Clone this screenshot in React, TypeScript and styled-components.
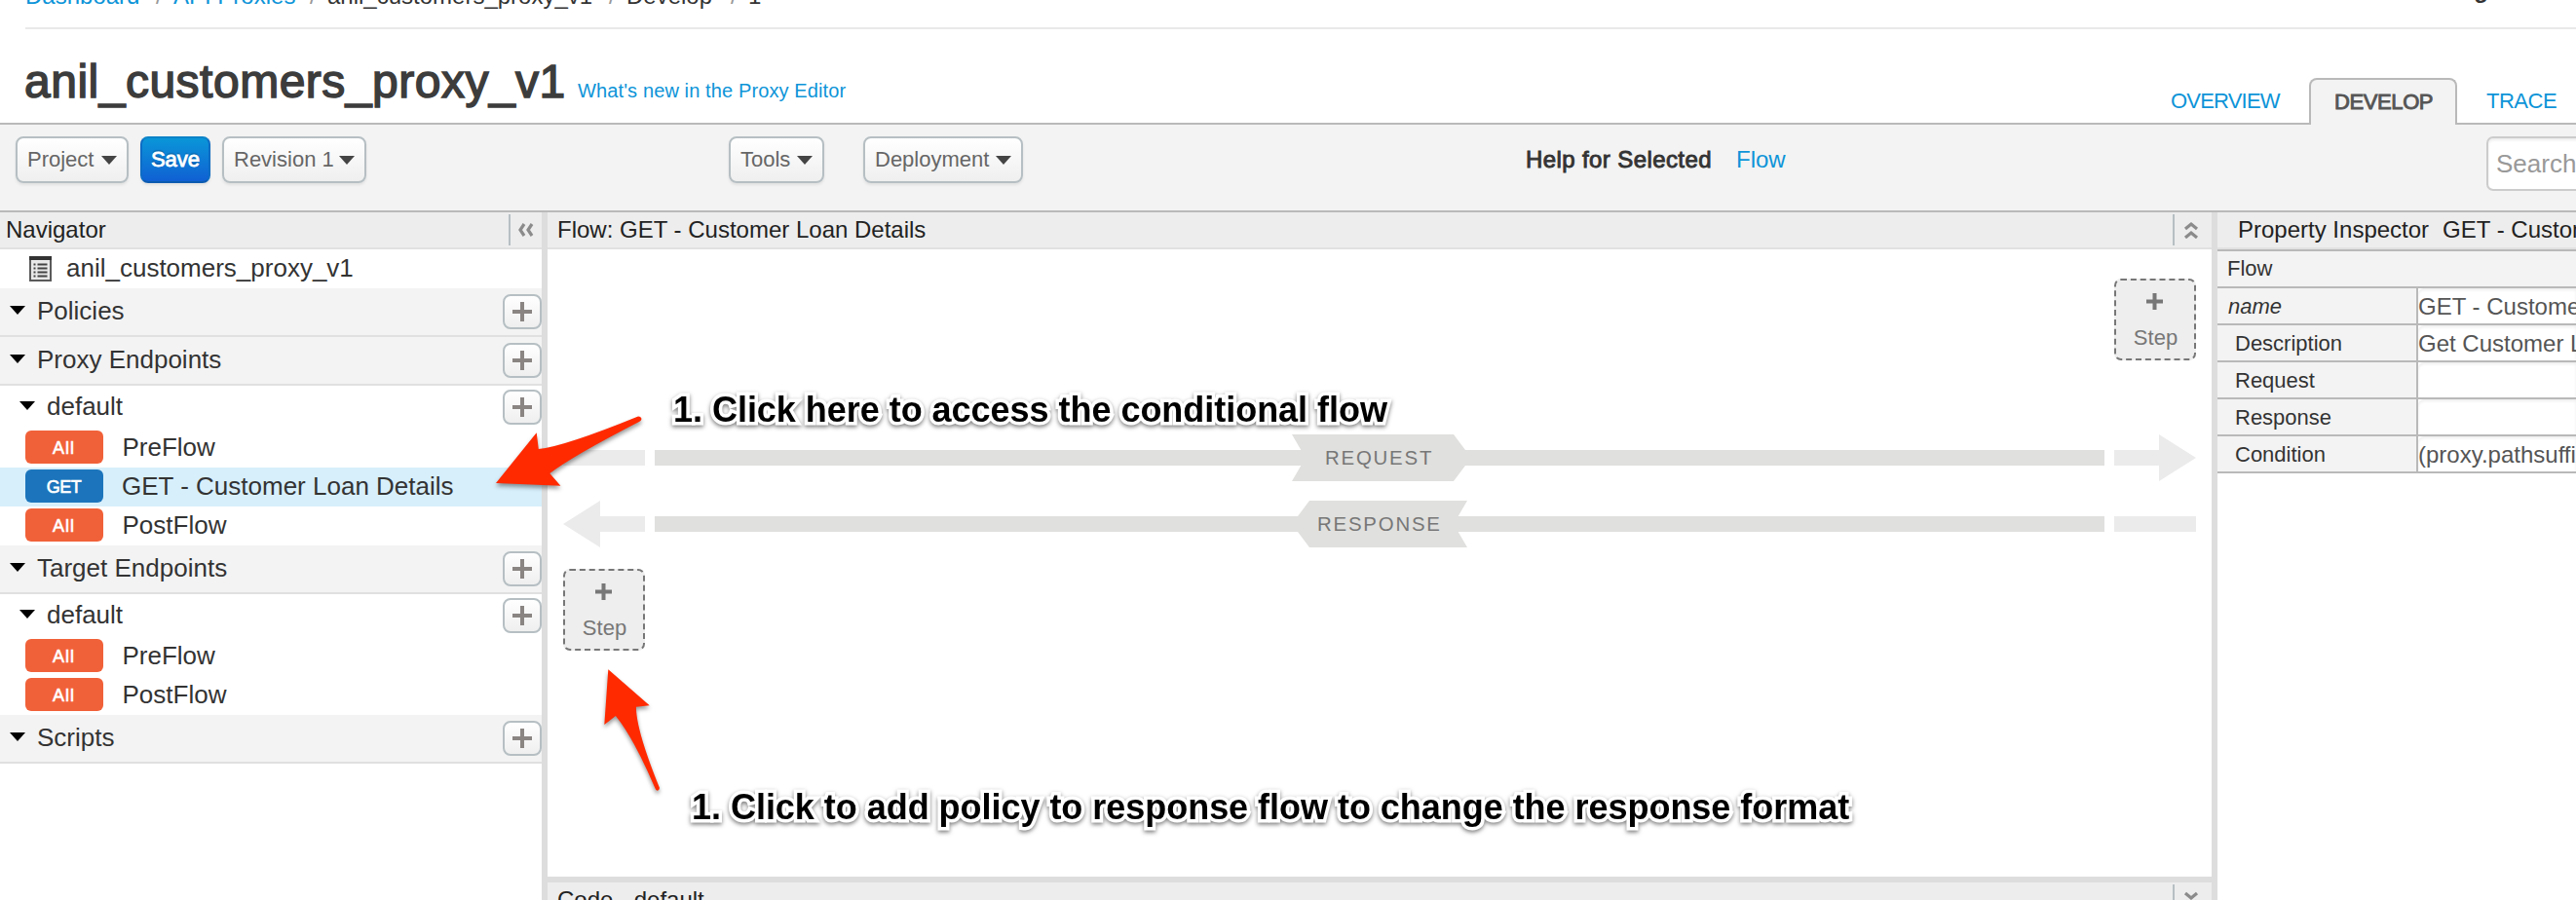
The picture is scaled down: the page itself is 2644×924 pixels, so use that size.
import React from "react";
import styled, { createGlobalStyle, css } from "styled-components";

const Global = createGlobalStyle`
  * { box-sizing: border-box; }
  html, body { margin: 0; padding: 0; background: #fff; }
  body { overflow: hidden; font-family: "Liberation Sans", Arial, sans-serif; color: #333; }
`;

const line = "#b9b9b9";
const soft = "#dddddd";
const link = "#0d94d8";

const Page = styled.div`
  position: relative;
  width: 2644px;
  height: 924px;
  overflow: hidden;
  display: flex;
  flex-direction: column;
  white-space: nowrap;
`;

/* ---------- top ---------- */
const Crumbs = styled.div`
  height: 30px;
  margin-left: 26px;
  border-bottom: 2px solid #e9e9e9;
  display: flex;
  overflow: hidden;
  font-size: 24px;
  line-height: 28px;
`;
const Crumb = styled.span<{ $link?: boolean; $w: number }>`
  width: ${(p) => p.$w}px;
  margin-top: -18px;
  color: ${(p) => (p.$link ? link : "#333")};
`;
const Slash = styled.span`
  width: 18px;
  margin-top: -18px;
  color: #999;
`;
const OrgName = styled.strong`
  margin: -24px 90px 0 auto;
`;
const TitleBar = styled.header`
  height: 98px;
  padding-left: 25px;
  border-bottom: 2px solid ${line};
  display: flex;
`;
const Title = styled.h1`
  margin: 26px 0 0;
  width: 568px;
  font-size: 48px;
  font-weight: 400;
  line-height: 56px;
  letter-spacing: 0.5px;
  color: #3c3c3c;
  -webkit-text-stroke: 1.5px #3c3c3c;
`;
const NewsLink = styled.a`
  margin-top: 51px;
  font-size: 20px;
  line-height: 24px;
  letter-spacing: 0.12px;
  color: ${link};
`;
const Tabs = styled.nav`
  margin: 50px 0 -2px auto;
  width: 416px;
  display: flex;
  font-size: 22px;
  line-height: 48px;
`;
const Tab = styled.a<{ $w: number; $ls: number }>`
  flex: none;
  width: ${(p) => p.$w}px;
  height: 46px;
  line-height: 48px;
  letter-spacing: ${(p) => p.$ls}px;
  color: ${link};
`;
const ActiveTab = styled(Tab)`
  height: 48px;
  line-height: 45px;
  margin-right: 30px;
  padding-left: 24px;
  background: #f3f3f3;
  border: 2px solid ${line};
  border-bottom: 0;
  border-radius: 8px 8px 0 0;
  color: #555;
  -webkit-text-stroke: 0.9px #555;
`;

/* ---------- toolbar ---------- */
const Toolbar = styled.div`
  height: 90px;
  padding: 12px 0 0 16px;
  background: #f3f3f3;
  border-bottom: 2px solid ${line};
  display: flex;
  align-items: flex-start;
  overflow: hidden;
`;
const Button = styled.button<{ $w: number; $gap?: number; $primary?: boolean }>`
  flex: none;
  width: ${(p) => p.$w}px;
  height: 48px;
  margin: 0 0 0 ${(p) => p.$gap ?? 0}px;
  padding: 0 10px 0;
  display: flex;
  align-items: center;
  justify-content: space-between;
  border: 2px solid #b6bfc3;
  border-radius: 8px;
  background: linear-gradient(#fff, #efefef);
  box-shadow: 0 2px 3px rgba(0, 0, 0, 0.08);
  font: 22px "Liberation Sans", Arial, sans-serif;
  color: #666;
  ${(p) =>
    p.$primary &&
    css`
      background: linear-gradient(#0a96d8, #1060d3);
      border-color: #0b83c8 #0d6cc5 #0d5bb0;
      justify-content: center;
      color: #fff;
      -webkit-text-stroke: 0.8px #fff;
      text-shadow: 0 -2px 1px rgba(0, 0, 0, 0.2);
    `}
`;
const Help = styled.span`
  flex: none;
  margin-left: 516px;
  width: 216px;
  font-size: 24px;
  line-height: 48px;
  letter-spacing: 0.4px;
  -webkit-text-stroke: 0.9px #333;
`;
const HelpLink = styled.a`
  flex: none;
  width: 770px;
  font-size: 24px;
  line-height: 48px;
  color: ${link};
`;
const Search = styled.div`
  flex: none;
  width: 300px;
  height: 56px;
  padding-left: 8px;
  background: #fff;
  border: 2px solid #ccc;
  border-radius: 7px;
  box-shadow: inset 0 2px 3px rgba(0, 0, 0, 0.08);
  font-size: 26px;
  line-height: 52px;
  color: #999;
`;

/* ---------- panels ---------- */
const Body = styled.div`
  flex: 1;
  min-height: 0;
  display: grid;
  grid-template-columns: 562px 1714px 368px;
`;
const Column = styled.section`
  min-width: 0;
  display: flex;
  flex-direction: column;
  overflow: hidden;
`;
const SplitColumn = styled(Column)`
  border-right: 6px solid ${soft};
`;
const PanelHead = styled.div<{ $pad: number }>`
  flex: none;
  height: 38px;
  padding-left: ${(p) => p.$pad}px;
  display: flex;
  justify-content: space-between;
  background: #ededed;
  border-bottom: 2px solid #e1e1e1;
  font-size: 24px;
  line-height: 36px;
  color: #222;
`;
const Collapse = styled.div<{ $w: number; $pad: number }>`
  width: ${(p) => p.$w}px;
  height: 32px;
  margin-top: 2px;
  border-left: 2px solid #b6bfc3;
  display: flex;
  align-items: center;
  padding-left: ${(p) => p.$pad}px;
`;
const Inspected = styled.span`
  margin-left: 14px;
`;

/* ---------- navigator ---------- */
const Row = styled.div<{ $pad: number; $h: number; $group?: boolean; $on?: boolean }>`
  flex: none;
  height: ${(p) => p.$h}px;
  padding-left: ${(p) => p.$pad}px;
  display: flex;
  align-items: center;
  font-size: 26px;
  background: ${(p) => (p.$group ? "#f3f3f3" : p.$on ? "#d7effb" : "#fff")};
  border-bottom: ${(p) => (p.$group ? "2px solid #e0e0e0" : "0")};
`;
const RowText = styled.span<{ $gap: number }>`
  margin-left: ${(p) => p.$gap}px;
  padding-bottom: 2px;
`;
const AddButton = styled.button`
  width: 40px;
  height: 36px;
  margin: 0 0 0 auto;
  padding: 0;
  display: flex;
  align-items: center;
  justify-content: center;
  border: 2px solid #b6bfc3;
  border-radius: 8px;
  background: linear-gradient(#fff, #efefef);
`;
const Badge = styled.span<{ $get?: boolean }>`
  width: 80px;
  height: 34px;
  margin-bottom: 2px;
  padding: 0 1px 0 0;
  text-align: center;
  font-size: 18px;
  line-height: 36px;
  letter-spacing: ${(p) => (p.$get ? -0.5 : 1)}px;
  border-radius: 6px;
  color: #fff;
  -webkit-text-stroke: 0.6px #fff;
  background: ${(p) => (p.$get ? "#1c75bc" : "#f16139")};
`;

/* ---------- flow ---------- */
const Canvas = styled.div`
  flex: none;
  height: 650px;
  padding: 30px 16px 0;
  border-bottom: 6px solid ${soft};
  display: flex;
  flex-direction: column;
`;
const Step = styled.button<{ $end?: boolean }>`
  flex: none;
  width: 84px;
  height: 84px;
  margin: 0;
  padding: 13px 2px 0 0;
  align-self: ${(p) => (p.$end ? "flex-end" : "flex-start")};
  display: flex;
  flex-direction: column;
  align-items: center;
  background: #eeeeee;
  border: 2px dashed #777;
  border-radius: 7px;
  font: 22px "Liberation Sans", Arial, sans-serif;
  color: #777;
`;
const StepText = styled.span`
  margin: 17px 0 0 3px;
  line-height: 24px;
`;
const Lane = styled.div<{ $top: number; $bottom?: number }>`
  flex: none;
  height: 48px;
  margin: ${(p) => p.$top}px 0 ${(p) => p.$bottom ?? 0}px;
  display: grid;
  grid-template-columns: 84px 1fr 84px;
  column-gap: 10px;
`;
const Track = styled.div`
  padding-left: 654px;
  background: linear-gradient(#e0e0de, #e0e0de) 0 50% / 100% 16px no-repeat;
`;
const Stub = styled.div`
  align-self: center;
  height: 16px;
  background: #ebebeb;
`;
const ArrowStub = styled.div<{ $left?: boolean }>`
  background: #ebebeb;
  clip-path: ${(p) =>
    p.$left
      ? "polygon(0 50%, 38px 0, 38px 16px, 100% 16px, 100% 32px, 38px 32px, 38px 100%)"
      : "polygon(0 16px, 46px 16px, 46px 0, 100% 50%, 46px 100%, 46px 32px, 0 32px)"};
`;
const LaneLabel = styled.div<{ $left?: boolean }>`
  width: ${(p) => (p.$left ? 180 : 184)}px;
  height: 48px;
  padding-left: ${(p) => (p.$left ? 26 : 34)}px;
  background: #e0e0de;
  font-size: 20.4px;
  line-height: 49px;
  letter-spacing: 1.8px;
  color: #777;
  clip-path: ${(p) =>
    p.$left
      ? "polygon(18px 0, 100% 0, 166px 50%, 100% 100%, 18px 100%, 0 50%)"
      : "polygon(0 0, 166px 0, 100% 50%, 166px 100%, 0 100%, 14px 50%)"};
`;

/* ---------- inspector ---------- */
const PropGroup = styled.div`
  height: 40px;
  padding-left: 10px;
  border-top: 2px solid ${line};
  border-bottom: 2px solid ${line};
  background: #f3f3f3;
  font-size: 22px;
  line-height: 36px;
`;
const Prop = styled.div`
  height: 38px;
  display: grid;
  grid-template-columns: 206px 1fr;
  border-bottom: 2px solid ${line};
  line-height: 37px;
`;
const PropName = styled.div<{ $required?: boolean }>`
  height: 36px;
  padding-left: ${(p) => (p.$required ? 11 : 18)}px;
  font-size: 22px;
  font-style: ${(p) => (p.$required ? "italic" : "normal")};
  background: #f3f3f3;
  border-right: 2px solid ${line};
`;
const PropValue = styled.div`
  height: 36px;
  overflow: hidden;
  font-size: 24px;
  color: #555;
  border-radius: 6px 0 0 0;
  box-shadow: inset 0 2px 3px rgba(0, 0, 0, 0.07);
`;

/* ---------- callouts ---------- */
const Callout = styled.div<{ $x: number; $y: number }>`
  position: absolute;
  left: ${(p) => p.$x}px;
  top: ${(p) => p.$y}px;
  font-size: 36px;
  font-weight: 700;
  line-height: 40px;
  letter-spacing: -0.03px;
  color: #000;
  -webkit-text-stroke: 7px #fff;
  paint-order: stroke fill;
  filter: drop-shadow(0 2px 2px rgba(0, 0, 0, 0.5));
`;
const Pointers = styled.svg`
  position: absolute;
  left: 0;
  top: 0;
  pointer-events: none;
  filter: drop-shadow(0 3px 2px rgba(0, 0, 0, 0.4));
`;
const CaretSvg = styled.svg<{ $raise?: boolean }>`
  flex: none;
  margin-bottom: ${(p) => (p.$raise ? 4 : 0)}px;
`;

const Caret = ({ raise, fill = "#444" }: { raise?: boolean; fill?: string }) => (
  <CaretSvg $raise={raise} width="16" height="9" viewBox="0 0 16 9">
    <path d="M0 0H16L8 9Z" fill={fill} />
  </CaretSvg>
);
const Plus = ({ s, t, c }: { s: number; t: number; c: string }) => (
  <svg width={s} height={s} viewBox={`0 0 ${s} ${s}`}>
    <path d={`M${s / 2} 0V${s}M0 ${s / 2}H${s}`} stroke={c} strokeWidth={t} />
  </svg>
);
const Chevrons = ({ dir }: { dir: "left" | "up" | "down" }) => {
  const d = {
    left: "M7 3L3 9L7 15M15 3L11 9L15 15",
    up: "M2 8L8 3L14 8M2 17L8 12L14 17",
    down: "M2 2L8 7L14 2M2 10L8 15L14 10",
  }[dir];
  return (
    <svg width="18" height="18" viewBox="0 0 18 18">
      <path d={d} fill="none" stroke="#8b8b8b" strokeWidth="3.2" />
    </svg>
  );
};
const ProxyIcon = () => (
  <svg width="23" height="26" viewBox="0 0 23 26">
    <rect x="1" y="1" width="21" height="24" fill="#e8e8e8" stroke="#5a5a5a" strokeWidth="2" />
    <path d="M0 2H23" stroke="#333" strokeWidth="4" />
    <path d="M8.500 8.500H18.500M8.500 12.500H18.500M8.500 16.500H18.500M8.500 20.500H18.500" stroke="#444" strokeWidth="2" />
    <path d="M4.500 8.500H6.500M4.500 12.500H6.500M4.500 16.500H6.500M4.500 20.500H6.500" stroke="#444" strokeWidth="2" />
  </svg>
);

const Add = () => (
  <AddButton>
    <Plus s={20} t={4} c="#8a8583" />
  </AddButton>
);
const Group = ({ name }: { name: string }) => (
  <Row $pad={10} $h={50} $group>
    <Caret raise fill="#000" />
    <RowText $gap={12}>{name}</RowText>
    <Add />
  </Row>
);
const Endpoint = ({ name }: { name: string }) => (
  <Row $pad={20} $h={44}>
    <Caret raise fill="#000" />
    <RowText $gap={12}>{name}</RowText>
    <Add />
  </Row>
);
const Flow = ({ name, get }: { name: string; get?: boolean }) => (
  <Row $pad={26} $h={40} $on={get}>
    <Badge $get={get}>{get ? "GET" : "All"}</Badge>
    <RowText $gap={get ? 19 : 19.5}>{name}</RowText>
  </Row>
);
const AddStep = ({ end }: { end?: boolean }) => (
  <Step $end={end}>
    <Plus s={17} t={4} c="#777" />
    <StepText>Step</StepText>
  </Step>
);

const properties: [string, string][] = [
  ["name", "GET - Customer Loan Details"],
  ["Description", "Get Customer Loan Details"],
  ["Request", ""],
  ["Response", ""],
  ["Condition", "(proxy.pathsuffix MatchesPath"],
];

export default function App() {
  return (
    <Page>
      <Global />
      <Crumbs>
        <Crumb $link $w={134}>Dashboard</Crumb>
        <Slash>/</Slash>
        <Crumb $link $w={140}>API Proxies</Crumb>
        <Slash>/</Slash>
        <Crumb $w={289}>anil_customers_proxy_v1</Crumb>
        <Slash>/</Slash>
        <Crumb $w={107}>Develop</Crumb>
        <Slash>/</Slash>
        <Crumb $w={40}>1</Crumb>
        <OrgName>g</OrgName>
      </Crumbs>
      <TitleBar>
        <Title>anil_customers_proxy_v1</Title>
        <NewsLink>What's new in the Proxy Editor</NewsLink>
        <Tabs>
          <Tab $w={142} $ls={-0.8}>OVERVIEW</Tab>
          <ActiveTab $w={152} $ls={-0.4}>DEVELOP</ActiveTab>
          <Tab $w={92} $ls={-0.5}>TRACE</Tab>
        </Tabs>
      </TitleBar>
      <Toolbar>
        <Button $w={116}>Project<Caret /></Button>
        <Button $w={72} $gap={12} $primary>Save</Button>
        <Button $w={148} $gap={12}>Revision 1<Caret /></Button>
        <Button $w={98} $gap={372}>Tools<Caret /></Button>
        <Button $w={164} $gap={40}>Deployment<Caret /></Button>
        <Help>Help for Selected</Help>
        <HelpLink>Flow</HelpLink>
        <Search>Search</Search>
      </Toolbar>
      <Body>
        <SplitColumn>
          <PanelHead $pad={6}>
            Navigator
            <Collapse $w={34} $pad={7}><Chevrons dir="left" /></Collapse>
          </PanelHead>
          <Row $pad={30} $h={40}>
            <ProxyIcon />
            <RowText $gap={15}>anil_customers_proxy_v1</RowText>
          </Row>
          <Group name="Policies" />
          <Group name="Proxy Endpoints" />
          <Endpoint name="default" />
          <Flow name="PreFlow" />
          <Flow name="GET - Customer Loan Details" get />
          <Flow name="PostFlow" />
          <Group name="Target Endpoints" />
          <Endpoint name="default" />
          <Flow name="PreFlow" />
          <Flow name="PostFlow" />
          <Group name="Scripts" />
        </SplitColumn>
        <SplitColumn>
          <PanelHead $pad={10}>
            Flow: GET - Customer Loan Details
            <Collapse $w={40} $pad={9}><Chevrons dir="up" /></Collapse>
          </PanelHead>
          <Canvas>
            <AddStep end />
            <Lane $top={76}>
              <Stub />
              <Track><LaneLabel>REQUEST</LaneLabel></Track>
              <ArrowStub />
            </Lane>
            <Lane $top={20} $bottom={22}>
              <ArrowStub $left />
              <Track><LaneLabel $left>RESPONSE</LaneLabel></Track>
              <Stub />
            </Lane>
            <AddStep />
          </Canvas>
          <PanelHead $pad={10}>
            Code - default
            <Collapse $w={40} $pad={9}><Chevrons dir="down" /></Collapse>
          </PanelHead>
        </SplitColumn>
        <Column>
          <PanelHead $pad={21}>
            <span>
              Property Inspector
              <Inspected>GET - Customer Loan Details</Inspected>
            </span>
          </PanelHead>
          <PropGroup>Flow</PropGroup>
          {properties.map(([name, value]) => (
            <Prop key={name}>
              <PropName $required={name === "name"}>{name}</PropName>
              <PropValue>{value}</PropValue>
            </Prop>
          ))}
        </Column>
      </Body>
      <Pointers width="2644" height="924" viewBox="0 0 2644 924" fill="#ff2a00">
        <path d="M509 496L550.7 444.3L552.8 461Q580 458 655 427.4Q658.6 427.6 658.4 430.5Q658 432 656 433Q588 468 564.3 486L575.4 498.7Z" />
        <path d="M624.3 687.3L666.7 724.3L652.9 725.7Q653 750 677 809Q676.5 812 674.5 811.8Q673 811 672.3 809Q650 757 631.9 735L620.3 744Z" />
      </Pointers>
      <Callout $x={691} $y={401}>1. Click here to access the conditional flow</Callout>
      <Callout $x={710} $y={809}>1. Click to add policy to response flow to change the response format</Callout>
    </Page>
  );
}
